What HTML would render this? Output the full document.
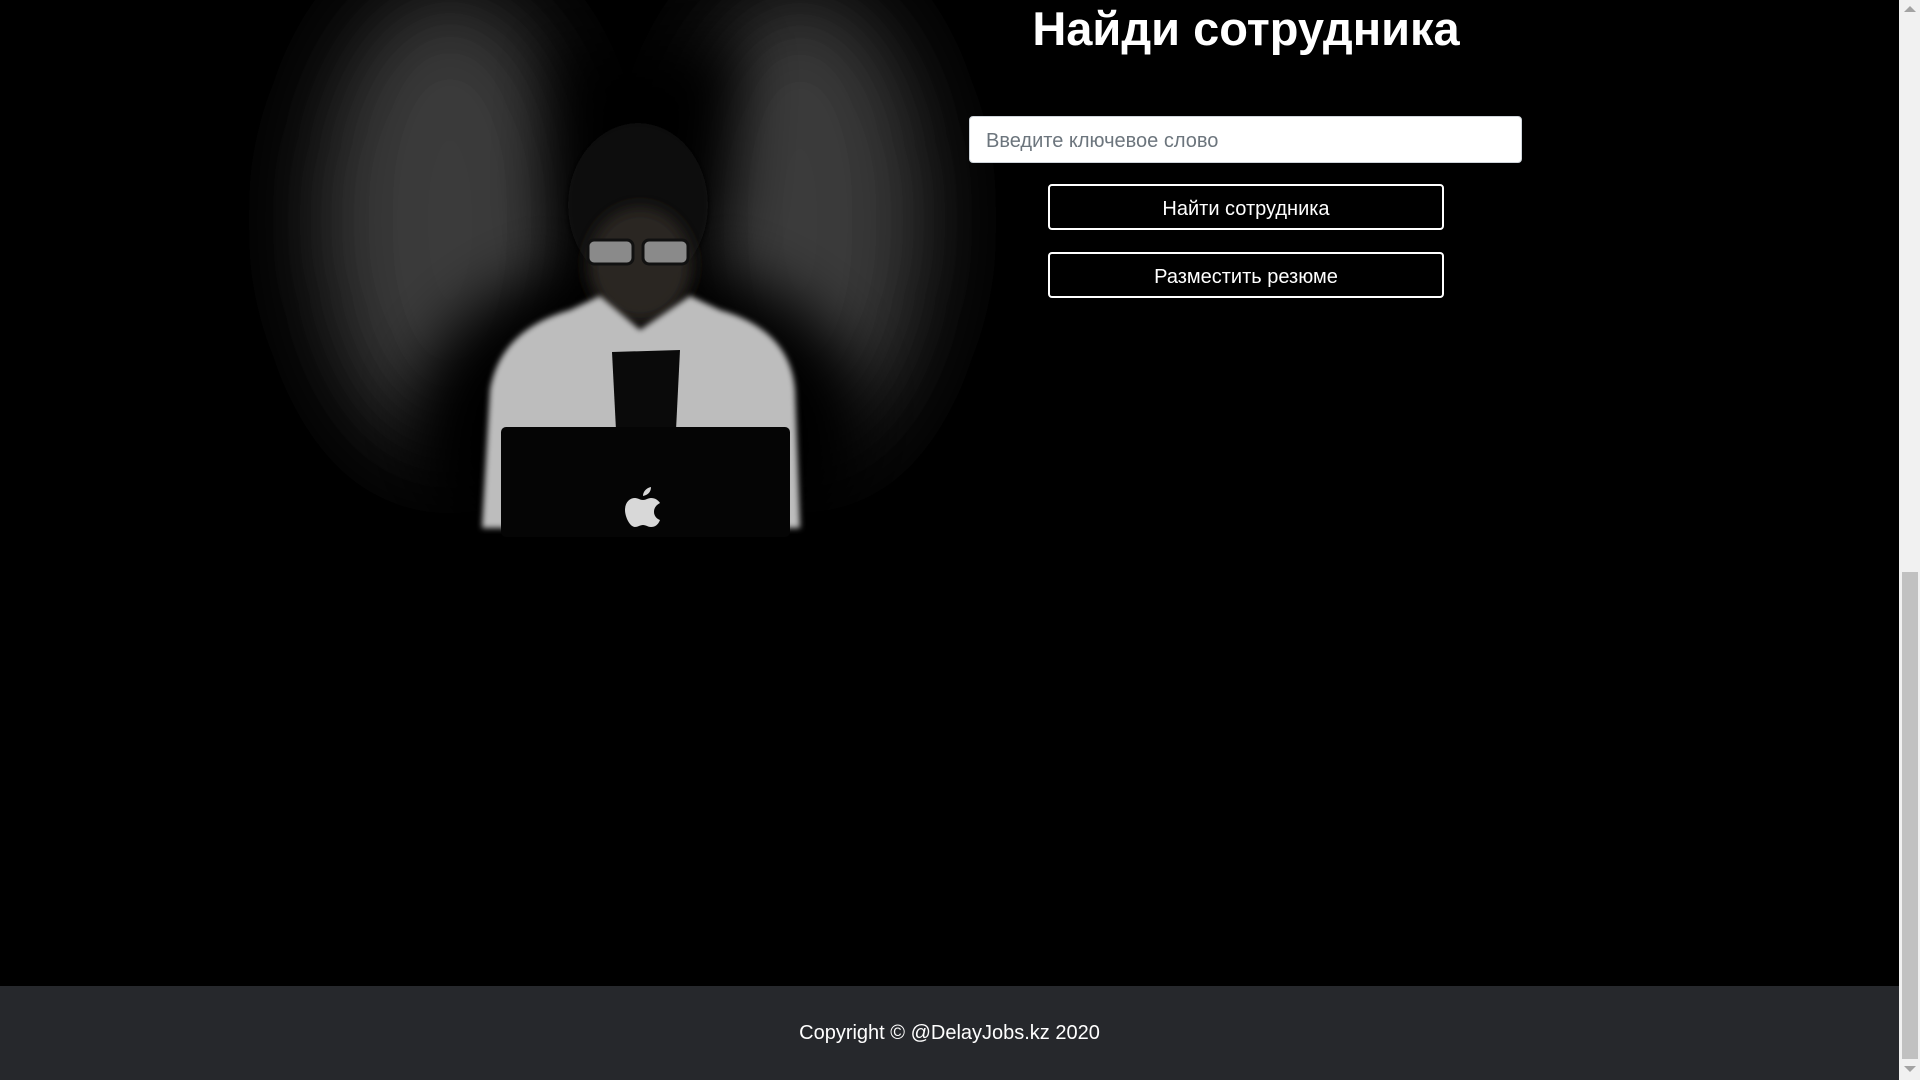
<!DOCTYPE html>
<html><head><meta charset="utf-8"><style>
html,body{margin:0;padding:0;width:1920px;height:1080px;overflow:hidden;background:#000;font-family:"Liberation Sans",sans-serif;}
.abs{position:absolute;}
h1{position:absolute;left:960px;width:572px;top:1px;margin:0;text-align:center;color:#fff;font-size:47px;font-weight:bold;line-height:56px;}
.inp{left:969px;top:116px;width:553px;background:#fff;border:1px solid #ced4da;border-radius:4px;color:#6c757d;font-size:20px;line-height:49px;padding-left:16px;box-sizing:border-box;height:47px;}
.btn{left:1048px;width:396px;height:46px;border:2px solid #fff;border-radius:4px;box-sizing:border-box;color:#fff;font-size:20px;text-align:center;line-height:46px;}
.foot{left:0;top:986px;width:1899px;height:94px;background:#26282c;color:#fff;font-size:20px;text-align:center;line-height:94px;}
.sb{left:1899px;top:0;width:21px;height:1080px;background:#f1f1f1;}
.th{left:1902px;top:572px;width:16px;height:487px;background:#c1c1c1;}
</style></head><body>
<svg class="abs" style="left:0;top:0" width="1200" height="750" viewBox="0 0 1200 750">
<defs>
<filter id="b50" x="-100%" y="-100%" width="300%" height="300%"><feGaussianBlur stdDeviation="45"/></filter>
<filter id="b30" x="-50%" y="-50%" width="200%" height="200%"><feGaussianBlur stdDeviation="30"/></filter>
<filter id="b10"><feGaussianBlur stdDeviation="8"/></filter>
<filter id="b3"><feGaussianBlur stdDeviation="3"/></filter>
</defs>
<ellipse cx="450" cy="220" rx="130" ry="230" fill="#3a3a3a" filter="url(#b50)"/>
<ellipse cx="800" cy="220" rx="125" ry="230" fill="#3a3a3a" filter="url(#b50)"/>
<path d="M560 40 L740 40 L730 200 L700 300 L790 560 L470 560 L570 300 L550 200Z" fill="#000" filter="url(#b30)"/>
<ellipse cx="640" cy="430" rx="230" ry="170" fill="#000" filter="url(#b30)"/>
<ellipse cx="638" cy="205" rx="70" ry="82" fill="#0a0a0a" filter="url(#b3)"/>
<ellipse cx="640" cy="265" rx="52" ry="58" fill="#2a2624" filter="url(#b10)"/>
<path d="M482 528 L490 390 Q500 330 570 310 L600 296 L640 330 L690 296 L720 310 Q790 330 795 390 L800 528Z" fill="#bdbdbd" filter="url(#b3)"/>
<path d="M612 352 L680 350 L676 430 L616 430Z" fill="#0a0a0a"/>
<rect x="588" y="240" width="45" height="24" rx="6" fill="#8a8a8a" stroke="#111" stroke-width="3"/>
<rect x="643" y="240" width="45" height="24" rx="6" fill="#8a8a8a" stroke="#111" stroke-width="3"/>
<rect x="501" y="427" width="289" height="110" rx="5" fill="#050505"/>
<g transform="translate(9,37)">
<path d="M642 490 c-3 0 -5 -2 -8 -2 c-3 0 -5 2 -8 2 c-5 0 -10 -10 -10 -17 c0 -8 5 -12 10 -12 c3 0 5 2 8 2 c3 0 5 -2 8 -2 c4 0 7 2 9 5 c-4 2 -6 5 -6 9 c0 4 3 7 6 8 c-2 5 -5 7 -9 7z M634 459 c0 -4 3 -8 8 -9 c0 5 -3 8 -8 9z" fill="#d8d8d8"/>
</g>
</svg>
<h1>Найди сотрудника</h1>
<div class="abs inp">Введите ключевое слово</div>
<div class="abs btn" style="top:184px">Найти сотрудника</div>
<div class="abs btn" style="top:252px">Разместить резюме</div>
<div class="abs foot">Copyright © @DelayJobs.kz 2020</div>
<div class="abs sb"></div>
<div class="abs th"></div>
<div class="abs" style="left:1904px;top:1066px;width:0;height:0;border-left:6px solid transparent;border-right:6px solid transparent;border-top:6px solid #a3a3a3"></div>
<div class="abs" style="left:1904px;top:6px;width:0;height:0;border-left:6px solid transparent;border-right:6px solid transparent;border-bottom:6px solid #a3a3a3"></div>
</body></html>
